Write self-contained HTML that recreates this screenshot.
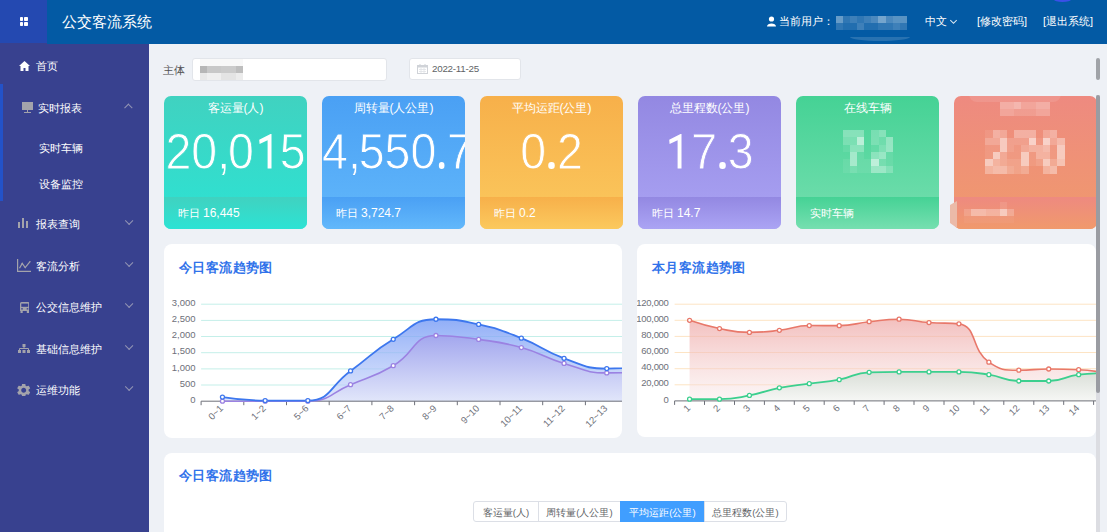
<!DOCTYPE html>
<html><head><meta charset="utf-8">
<style>
*{box-sizing:border-box;margin:0;padding:0}
html,body{width:1107px;height:532px;overflow:hidden;background:#eef1f6;font-family:"Liberation Sans", sans-serif;}
.abs{position:absolute}
#hdr{position:absolute;left:0;top:0;width:1107px;height:44px;background:#035aa4;color:#fff}
#logo{position:absolute;left:0;top:0;width:47.4px;height:43.2px;background:#2449b1}
#logo i{position:absolute;width:3.8px;height:3.8px;background:#fff;border-radius:0.8px}
#title{position:absolute;left:62px;top:12px;font-size:15px;line-height:20px;color:#fff;letter-spacing:0px}
.hr{position:absolute;top:14px;font-size:11px;line-height:15px;color:#fff}
#side{position:absolute;left:0;top:44px;width:149px;height:488px;background:#38418f}
.si{position:absolute;left:0;width:148px;color:#fff;font-size:11px;line-height:14px}
.si .tx{position:absolute;left:35.5px;top:0}
.si.sub .tx{left:39px}
.chev{position:absolute;left:126px;top:0.5px;width:5.5px;height:5.5px;border-left:1px solid #9294b4;border-bottom:1px solid #9294b4;transform:rotate(-45deg)}
.chev.up{transform:rotate(135deg);top:3.5px}
.card{position:absolute;top:96px;width:143px;height:133px;border-radius:7px;overflow:hidden;color:#fff}
.band{position:absolute;left:0;top:101px;width:143px;height:32px}
.ct{position:absolute;left:0;top:4px;width:143px;text-align:center;font-size:12px;line-height:16px}
.cn{position:absolute;left:-30px;top:28px;width:203px;text-align:center;font-size:50px;line-height:56px;letter-spacing:0px;white-space:nowrap;transform:scaleX(0.93)}.cn u{text-decoration:none;color:transparent;-webkit-text-stroke-color:transparent}.cn i{font-style:normal;letter-spacing:-2.3px}.cn i.d{display:inline-block;width:6.6px;height:6.6px;border-radius:50%;background:#fff;margin:0 2.5px 0 2.5px;letter-spacing:0}
.cf{position:absolute;left:14px;top:110px;font-size:10.8px;line-height:15px}.cf b{font-weight:normal;font-size:12px}
.panel{position:absolute;background:#fff;border-radius:8px;overflow:hidden}
.ptitle{position:absolute;left:15px;top:15px;font-size:13px;letter-spacing:0.4px;line-height:18px;font-weight:bold;color:#3072ea}
.inp{position:absolute;top:58px;height:23px;background:#fff;border:1px solid #e2e5ea;border-radius:3px}
.btns{position:absolute;left:473px;top:501px;height:21px;display:flex;font-size:9.5px;color:#606266}
.btns div{height:21px;line-height:18px;padding-top:2px;border:1px solid #dcdfe6;background:#fff;text-align:center;margin-left:-1px}.btns div:first-child{border-radius:3px 0 0 3px;margin-left:0}.btns div:last-child{border-radius:0 3px 3px 0}
.btns div.on{background:#409eff;border-color:#409eff;color:#fff}
</style></head><body>
<div id="hdr">
  <div id="logo"><i style="left:19.6px;top:17.4px"></i><i style="left:24.4px;top:17.4px"></i><i style="left:19.6px;top:22px"></i><i style="left:24.4px;top:22px"></i></div>
  <div id="title">公交客流系统</div>
  <svg class="abs" style="left:767px;top:16px" width="9" height="11" viewBox="0 0 9 11"><circle cx="4.5" cy="3" r="2.6" fill="#fff"/><path d="M0 10.5 C0 6.5 9 6.5 9 10.5 Z" fill="#fff"/></svg>
  <div class="hr" style="left:779px">当前用户：</div>
  <div class="abs" style="left:836px;top:16px;width:7px;height:7px;background:rgba(255,255,255,0.400)"></div><div class="abs" style="left:843px;top:16px;width:7px;height:7px;background:rgba(255,255,255,0.180)"></div><div class="abs" style="left:850px;top:16px;width:7px;height:7px;background:rgba(255,255,255,0.235)"></div><div class="abs" style="left:857px;top:16px;width:7px;height:7px;background:rgba(255,255,255,0.180)"></div><div class="abs" style="left:864px;top:16px;width:7px;height:7px;background:rgba(255,255,255,0.235)"></div><div class="abs" style="left:871px;top:16px;width:7px;height:7px;background:rgba(255,255,255,0.290)"></div><div class="abs" style="left:878px;top:16px;width:8px;height:7px;background:rgba(255,255,255,0.455)"></div><div class="abs" style="left:886px;top:16px;width:7px;height:7px;background:rgba(255,255,255,0.290)"></div><div class="abs" style="left:893px;top:16px;width:7px;height:7px;background:rgba(255,255,255,0.345)"></div><div class="abs" style="left:900px;top:16px;width:7px;height:7px;background:rgba(255,255,255,0.345)"></div><div class="abs" style="left:836px;top:23px;width:7px;height:7px;background:rgba(255,255,255,0.180)"></div><div class="abs" style="left:843px;top:23px;width:7px;height:7px;background:rgba(255,255,255,0.125)"></div><div class="abs" style="left:850px;top:23px;width:7px;height:7px;background:rgba(255,255,255,0.125)"></div><div class="abs" style="left:857px;top:23px;width:7px;height:7px;background:rgba(255,255,255,0.235)"></div><div class="abs" style="left:864px;top:23px;width:7px;height:7px;background:rgba(255,255,255,0.125)"></div><div class="abs" style="left:871px;top:23px;width:7px;height:7px;background:rgba(255,255,255,0.125)"></div><div class="abs" style="left:878px;top:23px;width:8px;height:7px;background:rgba(255,255,255,0.180)"></div><div class="abs" style="left:886px;top:23px;width:7px;height:7px;background:rgba(255,255,255,0.180)"></div><div class="abs" style="left:893px;top:23px;width:7px;height:7px;background:rgba(255,255,255,0.235)"></div><div class="abs" style="left:900px;top:23px;width:7px;height:7px;background:rgba(255,255,255,0.180)"></div><div class="abs" style="left:1054px;top:-3px;width:17px;height:5px;border-radius:50%;background:#3a50e8"></div><div class="abs" style="left:850px;top:37px;width:60px;height:4px;border-radius:0 0 30px 30px/0 0 4px 4px;background:rgba(255,255,255,0.15)"></div>
  <div class="hr" style="left:925px">中文</div>
  <div class="abs" style="left:951px;top:17.5px;width:5px;height:5px;border-right:1px solid rgba(255,255,255,0.85);border-bottom:1px solid rgba(255,255,255,0.85);transform:rotate(45deg)"></div>
  <div class="hr" style="left:977px">[修改密码]</div>
  <div class="hr" style="left:1043px">[退出系统]</div>
</div>
<div class="abs" style="left:0;top:43.2px;width:47.4px;height:1px;background:#38418f;z-index:2"></div>
<div id="side">
  <div class="abs" style="left:0;top:40px;width:3px;height:117px;background:#2352c8"></div>
  <div class="si" style="top:15px"><svg class="abs" style="left:18.5px;top:1.5px" width="11" height="10" viewBox="0 0 11 10"><path d="M5.5 0 L11 5 L9.5 5 L9.5 10 L6.5 10 L6.5 7 L4.5 7 L4.5 10 L1.5 10 L1.5 5 L0 5 Z" fill="#fff"/></svg><span class="tx" style="left:36px">首页</span></div>
  <div class="si" style="top:57px"><svg class="abs" style="left:22px;top:1px" width="11" height="11" viewBox="0 0 11 11"><rect x="0" y="0" width="11" height="8" fill="#a3a3ab"/><rect x="5" y="8" width="1" height="2" fill="#a3a3ab"/><rect x="2" y="10" width="7" height="1" fill="#a3a3ab"/></svg><span class="tx" style="left:38px">实时报表</span><div class="chev up"></div></div>
  <div class="si sub" style="top:97px"><span class="tx">实时车辆</span></div>
  <div class="si sub" style="top:133px"><span class="tx">设备监控</span></div>
  <div class="si" style="top:173px"><svg class="abs" style="left:18px;top:1px" width="10" height="10" viewBox="0 0 10 10"><rect x="0" y="4" width="2" height="6" fill="#a3a3ab"/><rect x="4" y="0" width="2" height="10" fill="#a3a3ab"/><rect x="8" y="3" width="2" height="7" fill="#a3a3ab"/></svg><span class="tx">报表查询</span><div class="chev"></div></div>
  <div class="si" style="top:215px"><svg class="abs" style="left:17px;top:0px" width="14" height="13" viewBox="0 0 14 13"><path d="M0.6 0 V12.4 H14" fill="none" stroke="#a3a3ab" stroke-width="1.2"/><path d="M2.5 9.2 L5.2 4.4 L8.2 8.6 L13 2.6" fill="none" stroke="#a3a3ab" stroke-width="1.2"/><circle cx="5.2" cy="4.4" r="0.7" fill="#a3a3ab"/><circle cx="8.2" cy="8.6" r="0.7" fill="#a3a3ab"/><circle cx="13" cy="2.6" r="0.7" fill="#a3a3ab"/></svg><span class="tx">客流分析</span><div class="chev"></div></div>
  <div class="si" style="top:256px"><svg class="abs" style="left:19.5px;top:1.5px" width="9.5" height="11" viewBox="0 0 9.5 11"><path d="M1.5 0 H8 Q9.5 0 9.5 1.5 V9 H0 V1.5 Q0 0 1.5 0 Z" fill="#a3a3ab"/><rect x="1.3" y="1.6" width="6.9" height="3.2" fill="#38418f"/><rect x="1.2" y="6.2" width="1.6" height="1.3" fill="#38418f"/><rect x="6.7" y="6.2" width="1.6" height="1.3" fill="#38418f"/><rect x="0.5" y="9" width="2.2" height="2" fill="#a3a3ab"/><rect x="6.8" y="9" width="2.2" height="2" fill="#a3a3ab"/></svg><span class="tx">公交信息维护</span><div class="chev"></div></div>
  <div class="si" style="top:298px"><svg class="abs" style="left:18.3px;top:1.5px" width="12" height="9" viewBox="0 0 12 9"><rect x="4.5" y="0" width="3" height="3" fill="#a3a3ab"/><rect x="5.5" y="3" width="1" height="1.8" fill="#a3a3ab"/><path d="M1.5 6.5 V4.5 H10.5 V6.5" fill="none" stroke="#a3a3ab" stroke-width="1"/><rect x="0" y="6" width="3" height="3" fill="#a3a3ab"/><rect x="4.5" y="6" width="3" height="3" fill="#a3a3ab"/><rect x="9" y="6" width="3" height="3" fill="#a3a3ab"/></svg><span class="tx">基础信息维护</span><div class="chev"></div></div>
  <div class="si" style="top:339px"><svg class="abs" style="left:17.3px;top:0.5px" width="13.4" height="12.5" viewBox="2.6 2.9 18.8 18.2"><path fill="#a3a3ab" d="M19.14 12.94c.04-.3.06-.61.06-.94 0-.32-.02-.64-.07-.94l2.03-1.58a.49.49 0 0 0 .12-.61l-1.92-3.32a.488.488 0 0 0-.59-.22l-2.39.96c-.5-.38-1.03-.7-1.62-.94l-.36-2.54a.484.484 0 0 0-.48-.41h-3.84c-.24 0-.43.17-.47.41l-.36 2.54c-.59.24-1.13.57-1.62.94l-2.39-.96c-.22-.08-.47 0-.59.22L2.74 8.87c-.12.21-.08.47.12.61l2.03 1.58c-.05.3-.09.63-.09.94s.02.64.07.94l-2.03 1.58a.49.49 0 0 0-.12.61l1.92 3.32c.12.22.37.29.59.22l2.39-.96c.5.38 1.03.7 1.62.94l.36 2.54c.05.24.24.41.48.41h3.84c.24 0 .44-.17.47-.41l.36-2.54c.59-.24 1.13-.56 1.62-.94l2.39.96c.22.08.47 0 .59-.22l1.92-3.32c.12-.22.07-.47-.12-.61l-2.01-1.58zM12 15.6c-1.98 0-3.6-1.62-3.6-3.6s1.62-3.6 3.6-3.6 3.6 1.62 3.6 3.6-1.62 3.6-3.6 3.6z"/></svg><span class="tx">运维功能</span><div class="chev"></div></div>
</div>
<div class="abs" style="left:163px;top:63px;font-size:11.2px;line-height:14px;color:#505050">主体</div>
<div class="inp" style="left:192px;width:195px"></div><div class="abs" style="left:200px;top:59px;width:7px;height:7px;background:#f8f8f8"></div><div class="abs" style="left:207px;top:59px;width:7px;height:7px;background:#f8f8f8"></div><div class="abs" style="left:214px;top:59px;width:7px;height:7px;background:#f8f8f8"></div><div class="abs" style="left:221px;top:59px;width:7px;height:7px;background:#f8f8f8"></div><div class="abs" style="left:228px;top:59px;width:8px;height:7px;background:#f8f8f8"></div><div class="abs" style="left:236px;top:59px;width:7px;height:7px;background:#f8f8f8"></div><div class="abs" style="left:200px;top:66px;width:7px;height:7px;background:#b6b6b6"></div><div class="abs" style="left:207px;top:66px;width:7px;height:7px;background:#c8c8c8"></div><div class="abs" style="left:214px;top:66px;width:7px;height:7px;background:#c8c8c8"></div><div class="abs" style="left:221px;top:66px;width:7px;height:7px;background:#cbcbcb"></div><div class="abs" style="left:228px;top:66px;width:8px;height:7px;background:#cbcbcb"></div><div class="abs" style="left:236px;top:66px;width:7px;height:7px;background:#bebebe"></div><div class="abs" style="left:200px;top:73px;width:7px;height:7px;background:#e8e8e8"></div><div class="abs" style="left:207px;top:73px;width:7px;height:7px;background:#efefef"></div><div class="abs" style="left:214px;top:73px;width:7px;height:7px;background:#efefef"></div><div class="abs" style="left:221px;top:73px;width:7px;height:7px;background:#e4e4e4"></div><div class="abs" style="left:228px;top:73px;width:8px;height:7px;background:#e4e4e4"></div><div class="abs" style="left:236px;top:73px;width:7px;height:7px;background:#ececec"></div>
<div class="inp" style="left:409px;width:112px;top:58px;height:22px">
 <svg class="abs" style="left:7px;top:5px" width="11" height="10" viewBox="0 0 11 10"><rect x="0.5" y="1.5" width="10" height="8" fill="none" stroke="#d0d3d8"/><rect x="0.5" y="1.5" width="10" height="2" fill="#d0d3d8"/><rect x="2.5" y="0" width="1" height="2" fill="#d0d3d8"/><rect x="7.5" y="0" width="1" height="2" fill="#d0d3d8"/><path d="M2 5.5h7M2 7.5h7M4 4v5M7 4v5" stroke="#e0e2e6" stroke-width="0.8"/></svg>
 <div class="abs" style="left:22px;top:2.5px;font-size:9.8px;letter-spacing:-0.25px;line-height:13px;color:#606266">2022-11-25</div>
</div>
<div class="card" style="left:164px;background:linear-gradient(180deg,#40d2c0 0%,#2ce3d4 100%)"><div class="band" style="background:linear-gradient(180deg,#40d2c0 0%,#2ce3d4 100%)"></div><div class="ct">客运量(人)</div><div class="cn" style="-webkit-text-stroke:0.8px #38d9c8;margin-left:0px">20<i>,</i>0<u>1</u>5</div><div class="cf">昨日 <b>16,445</b></div></div><div class="card" style="left:322px;background:linear-gradient(180deg,#4aa0f4 0%,#62b8fb 100%)"><div class="band" style="background:linear-gradient(180deg,#4aa0f4 0%,#62b8fb 100%)"></div><div class="ct">周转量(人公里)</div><div class="cn" style="-webkit-text-stroke:0.8px #54aaf7;margin-left:4px">4<i>,</i>550<i class='d'></i>7</div><div class="cf">昨日 <b>3,724.7</b></div></div><div class="card" style="left:480px;background:linear-gradient(180deg,#f7b04a 0%,#fbc95e 100%)"><div class="band" style="background:linear-gradient(180deg,#f7b04a 0%,#fbc95e 100%)"></div><div class="ct">平均运距(公里)</div><div class="cn" style="-webkit-text-stroke:0.8px #f9ba52;margin-left:0px">0<i class='d'></i>2</div><div class="cf">昨日 <b>0.2</b></div></div><div class="card" style="left:638px;background:linear-gradient(180deg,#9388e2 0%,#aba4f4 100%)"><div class="band" style="background:linear-gradient(180deg,#9388e2 0%,#aba4f4 100%)"></div><div class="ct">总里程数(公里)</div><div class="cn" style="-webkit-text-stroke:0.8px #9d94ea;margin-left:0px"><u>1</u>7<i class='d'></i>3</div><div class="cf">昨日 <b>14.7</b></div></div><div class="card" style="left:796px;background:linear-gradient(180deg,#45d295 0%,#76dfb0 100%)"><div class="band" style="background:linear-gradient(180deg,#45d295 0%,#76dfb0 100%)"></div><div class="ct">在线车辆</div><div class="cf">实时车辆</div></div><div class="card" style="left:954px;background:linear-gradient(180deg,#ee8a80 0%,#f09a6c 100%)"><div class="band" style="background:linear-gradient(180deg,#ee8a80 0%,#f09a6c 100%)"></div></div><div class="abs" style="left:843px;top:130px;width:7px;height:7px;background:rgba(255,255,255,0.300)"></div><div class="abs" style="left:850px;top:130px;width:7px;height:7px;background:rgba(255,255,255,0.300)"></div><div class="abs" style="left:857px;top:130px;width:7px;height:7px;background:rgba(255,255,255,0.300)"></div><div class="abs" style="left:871px;top:130px;width:8px;height:7px;background:rgba(255,255,255,0.225)"></div><div class="abs" style="left:879px;top:130px;width:7px;height:7px;background:rgba(255,255,255,0.300)"></div><div class="abs" style="left:843px;top:137px;width:7px;height:8px;background:rgba(255,255,255,0.225)"></div><div class="abs" style="left:850px;top:137px;width:7px;height:8px;background:rgba(255,255,255,0.225)"></div><div class="abs" style="left:857px;top:137px;width:7px;height:8px;background:rgba(255,255,255,0.600)"></div><div class="abs" style="left:871px;top:137px;width:8px;height:8px;background:rgba(255,255,255,0.225)"></div><div class="abs" style="left:879px;top:137px;width:7px;height:8px;background:rgba(255,255,255,0.150)"></div><div class="abs" style="left:886px;top:137px;width:7px;height:8px;background:rgba(255,255,255,0.375)"></div><div class="abs" style="left:843px;top:145px;width:7px;height:7px;background:rgba(255,255,255,0.075)"></div><div class="abs" style="left:850px;top:145px;width:7px;height:7px;background:rgba(255,255,255,0.300)"></div><div class="abs" style="left:857px;top:145px;width:7px;height:7px;background:rgba(255,255,255,0.300)"></div><div class="abs" style="left:871px;top:145px;width:8px;height:7px;background:rgba(255,255,255,0.075)"></div><div class="abs" style="left:879px;top:145px;width:7px;height:7px;background:rgba(255,255,255,0.225)"></div><div class="abs" style="left:886px;top:145px;width:7px;height:7px;background:rgba(255,255,255,0.375)"></div><div class="abs" style="left:850px;top:152px;width:7px;height:7px;background:rgba(255,255,255,0.450)"></div><div class="abs" style="left:857px;top:152px;width:7px;height:7px;background:rgba(255,255,255,0.075)"></div><div class="abs" style="left:871px;top:152px;width:8px;height:7px;background:rgba(255,255,255,0.300)"></div><div class="abs" style="left:879px;top:152px;width:7px;height:7px;background:rgba(255,255,255,0.375)"></div><div class="abs" style="left:886px;top:152px;width:7px;height:7px;background:rgba(255,255,255,0.075)"></div><div class="abs" style="left:843px;top:159px;width:7px;height:7px;background:rgba(255,255,255,0.075)"></div><div class="abs" style="left:850px;top:159px;width:7px;height:7px;background:rgba(255,255,255,0.450)"></div><div class="abs" style="left:857px;top:159px;width:7px;height:7px;background:rgba(255,255,255,0.075)"></div><div class="abs" style="left:864px;top:159px;width:7px;height:7px;background:rgba(255,255,255,0.075)"></div><div class="abs" style="left:871px;top:159px;width:8px;height:7px;background:rgba(255,255,255,0.600)"></div><div class="abs" style="left:879px;top:159px;width:7px;height:7px;background:rgba(255,255,255,0.150)"></div><div class="abs" style="left:886px;top:159px;width:7px;height:7px;background:rgba(255,255,255,0.075)"></div><div class="abs" style="left:843px;top:166px;width:7px;height:7px;background:rgba(255,255,255,0.075)"></div><div class="abs" style="left:850px;top:166px;width:7px;height:7px;background:rgba(255,255,255,0.150)"></div><div class="abs" style="left:857px;top:166px;width:7px;height:7px;background:rgba(255,255,255,0.075)"></div><div class="abs" style="left:864px;top:166px;width:7px;height:7px;background:rgba(255,255,255,0.075)"></div><div class="abs" style="left:871px;top:166px;width:8px;height:7px;background:rgba(255,255,255,0.375)"></div><div class="abs" style="left:879px;top:166px;width:7px;height:7px;background:rgba(255,255,255,0.375)"></div><div class="abs" style="left:886px;top:166px;width:7px;height:7px;background:rgba(255,255,255,0.225)"></div><div class="abs" style="left:969px;top:94px;width:92px;height:8px;border-radius:0 0 10px 10px;background:rgba(255,255,255,0.10)"></div><div class="abs" style="left:950px;top:201px;width:7px;height:27px;background:#ebbaa8;clip-path:polygon(0 4px,7px 0,7px 27px,0 22px)"></div><div class="abs" style="left:985px;top:130px;width:8px;height:8px;background:rgba(255,255,255,0.075)"></div><div class="abs" style="left:993px;top:130px;width:7px;height:8px;background:rgba(255,255,255,0.300)"></div><div class="abs" style="left:1000px;top:130px;width:7px;height:8px;background:rgba(255,255,255,0.225)"></div><div class="abs" style="left:1014px;top:130px;width:7px;height:8px;background:rgba(255,255,255,0.300)"></div><div class="abs" style="left:1021px;top:130px;width:8px;height:8px;background:rgba(255,255,255,0.300)"></div><div class="abs" style="left:1029px;top:130px;width:7px;height:8px;background:rgba(255,255,255,0.300)"></div><div class="abs" style="left:1043px;top:130px;width:7px;height:8px;background:rgba(255,255,255,0.225)"></div><div class="abs" style="left:1050px;top:130px;width:7px;height:8px;background:rgba(255,255,255,0.300)"></div><div class="abs" style="left:985px;top:138px;width:8px;height:7px;background:rgba(255,255,255,0.225)"></div><div class="abs" style="left:993px;top:138px;width:7px;height:7px;background:rgba(255,255,255,0.225)"></div><div class="abs" style="left:1000px;top:138px;width:7px;height:7px;background:rgba(255,255,255,0.525)"></div><div class="abs" style="left:1007px;top:138px;width:7px;height:7px;background:rgba(255,255,255,0.150)"></div><div class="abs" style="left:1014px;top:138px;width:7px;height:7px;background:rgba(255,255,255,0.150)"></div><div class="abs" style="left:1021px;top:138px;width:8px;height:7px;background:rgba(255,255,255,0.150)"></div><div class="abs" style="left:1029px;top:138px;width:7px;height:7px;background:rgba(255,255,255,0.600)"></div><div class="abs" style="left:1036px;top:138px;width:7px;height:7px;background:rgba(255,255,255,0.075)"></div><div class="abs" style="left:1043px;top:138px;width:7px;height:7px;background:rgba(255,255,255,0.600)"></div><div class="abs" style="left:1050px;top:138px;width:7px;height:7px;background:rgba(255,255,255,0.225)"></div><div class="abs" style="left:1057px;top:138px;width:8px;height:7px;background:rgba(255,255,255,0.375)"></div><div class="abs" style="left:985px;top:145px;width:8px;height:7px;background:rgba(255,255,255,0.075)"></div><div class="abs" style="left:993px;top:145px;width:7px;height:7px;background:rgba(255,255,255,0.075)"></div><div class="abs" style="left:1000px;top:145px;width:7px;height:7px;background:rgba(255,255,255,0.525)"></div><div class="abs" style="left:1007px;top:145px;width:7px;height:7px;background:rgba(255,255,255,0.150)"></div><div class="abs" style="left:1014px;top:145px;width:7px;height:7px;background:rgba(255,255,255,0.075)"></div><div class="abs" style="left:1021px;top:145px;width:8px;height:7px;background:rgba(255,255,255,0.225)"></div><div class="abs" style="left:1029px;top:145px;width:7px;height:7px;background:rgba(255,255,255,0.300)"></div><div class="abs" style="left:1036px;top:145px;width:7px;height:7px;background:rgba(255,255,255,0.300)"></div><div class="abs" style="left:1043px;top:145px;width:7px;height:7px;background:rgba(255,255,255,0.375)"></div><div class="abs" style="left:1050px;top:145px;width:7px;height:7px;background:rgba(255,255,255,0.075)"></div><div class="abs" style="left:1057px;top:145px;width:8px;height:7px;background:rgba(255,255,255,0.525)"></div><div class="abs" style="left:985px;top:152px;width:8px;height:7px;background:rgba(255,255,255,0.075)"></div><div class="abs" style="left:993px;top:152px;width:7px;height:7px;background:rgba(255,255,255,0.525)"></div><div class="abs" style="left:1000px;top:152px;width:7px;height:7px;background:rgba(255,255,255,0.225)"></div><div class="abs" style="left:1007px;top:152px;width:7px;height:7px;background:rgba(255,255,255,0.075)"></div><div class="abs" style="left:1014px;top:152px;width:7px;height:7px;background:rgba(255,255,255,0.075)"></div><div class="abs" style="left:1021px;top:152px;width:8px;height:7px;background:rgba(255,255,255,0.525)"></div><div class="abs" style="left:1029px;top:152px;width:7px;height:7px;background:rgba(255,255,255,0.075)"></div><div class="abs" style="left:1036px;top:152px;width:7px;height:7px;background:rgba(255,255,255,0.300)"></div><div class="abs" style="left:1043px;top:152px;width:7px;height:7px;background:rgba(255,255,255,0.300)"></div><div class="abs" style="left:1050px;top:152px;width:7px;height:7px;background:rgba(255,255,255,0.075)"></div><div class="abs" style="left:1057px;top:152px;width:8px;height:7px;background:rgba(255,255,255,0.525)"></div><div class="abs" style="left:985px;top:159px;width:8px;height:7px;background:rgba(255,255,255,0.525)"></div><div class="abs" style="left:993px;top:159px;width:7px;height:7px;background:rgba(255,255,255,0.300)"></div><div class="abs" style="left:1000px;top:159px;width:7px;height:7px;background:rgba(255,255,255,0.225)"></div><div class="abs" style="left:1007px;top:159px;width:7px;height:7px;background:rgba(255,255,255,0.150)"></div><div class="abs" style="left:1014px;top:159px;width:7px;height:7px;background:rgba(255,255,255,0.150)"></div><div class="abs" style="left:1021px;top:159px;width:8px;height:7px;background:rgba(255,255,255,0.525)"></div><div class="abs" style="left:1029px;top:159px;width:7px;height:7px;background:rgba(255,255,255,0.075)"></div><div class="abs" style="left:1036px;top:159px;width:7px;height:7px;background:rgba(255,255,255,0.150)"></div><div class="abs" style="left:1043px;top:159px;width:7px;height:7px;background:rgba(255,255,255,0.525)"></div><div class="abs" style="left:1050px;top:159px;width:7px;height:7px;background:rgba(255,255,255,0.225)"></div><div class="abs" style="left:1057px;top:159px;width:8px;height:7px;background:rgba(255,255,255,0.450)"></div><div class="abs" style="left:985px;top:166px;width:8px;height:8px;background:rgba(255,255,255,0.300)"></div><div class="abs" style="left:993px;top:166px;width:7px;height:8px;background:rgba(255,255,255,0.375)"></div><div class="abs" style="left:1000px;top:166px;width:7px;height:8px;background:rgba(255,255,255,0.375)"></div><div class="abs" style="left:1007px;top:166px;width:7px;height:8px;background:rgba(255,255,255,0.225)"></div><div class="abs" style="left:1014px;top:166px;width:7px;height:8px;background:rgba(255,255,255,0.150)"></div><div class="abs" style="left:1021px;top:166px;width:8px;height:8px;background:rgba(255,255,255,0.225)"></div><div class="abs" style="left:1043px;top:166px;width:7px;height:8px;background:rgba(255,255,255,0.300)"></div><div class="abs" style="left:1050px;top:166px;width:7px;height:8px;background:rgba(255,255,255,0.375)"></div><div class="abs" style="left:1000px;top:102px;width:7px;height:7px;background:rgba(255,255,255,0.300)"></div><div class="abs" style="left:1007px;top:102px;width:7px;height:7px;background:rgba(255,255,255,0.300)"></div><div class="abs" style="left:1014px;top:102px;width:7px;height:7px;background:rgba(255,255,255,0.375)"></div><div class="abs" style="left:1021px;top:102px;width:8px;height:7px;background:rgba(255,255,255,0.225)"></div><div class="abs" style="left:1029px;top:102px;width:7px;height:7px;background:rgba(255,255,255,0.225)"></div><div class="abs" style="left:1036px;top:102px;width:7px;height:7px;background:rgba(255,255,255,0.300)"></div><div class="abs" style="left:1043px;top:102px;width:7px;height:7px;background:rgba(255,255,255,0.300)"></div><div class="abs" style="left:1000px;top:109px;width:7px;height:7px;background:rgba(255,255,255,0.225)"></div><div class="abs" style="left:1007px;top:109px;width:7px;height:7px;background:rgba(255,255,255,0.225)"></div><div class="abs" style="left:1014px;top:109px;width:7px;height:7px;background:rgba(255,255,255,0.150)"></div><div class="abs" style="left:1021px;top:109px;width:8px;height:7px;background:rgba(255,255,255,0.150)"></div><div class="abs" style="left:1029px;top:109px;width:7px;height:7px;background:rgba(255,255,255,0.150)"></div><div class="abs" style="left:1036px;top:109px;width:7px;height:7px;background:rgba(255,255,255,0.225)"></div><div class="abs" style="left:1043px;top:109px;width:7px;height:7px;background:rgba(255,255,255,0.225)"></div><div class="abs" style="left:1000px;top:202px;width:7px;height:7px;background:rgba(255,255,255,0.090)"></div><div class="abs" style="left:964px;top:209px;width:7px;height:7px;background:rgba(255,255,255,0.150)"></div><div class="abs" style="left:971px;top:209px;width:7px;height:7px;background:rgba(255,255,255,0.375)"></div><div class="abs" style="left:978px;top:209px;width:8px;height:7px;background:rgba(255,255,255,0.375)"></div><div class="abs" style="left:986px;top:209px;width:7px;height:7px;background:rgba(255,255,255,0.300)"></div><div class="abs" style="left:993px;top:209px;width:7px;height:7px;background:rgba(255,255,255,0.300)"></div><div class="abs" style="left:1000px;top:209px;width:7px;height:7px;background:rgba(255,255,255,0.525)"></div><div class="abs" style="left:1007px;top:209px;width:7px;height:7px;background:rgba(255,255,255,0.225)"></div><div class="abs" style="left:964px;top:216px;width:7px;height:7px;background:rgba(255,255,255,0.045)"></div><div class="abs" style="left:971px;top:216px;width:7px;height:7px;background:rgba(255,255,255,0.045)"></div><div class="abs" style="left:978px;top:216px;width:8px;height:7px;background:rgba(255,255,255,0.045)"></div><div class="abs" style="left:986px;top:216px;width:7px;height:7px;background:rgba(255,255,255,0.045)"></div><div class="abs" style="left:993px;top:216px;width:7px;height:7px;background:rgba(255,255,255,0.045)"></div><div class="abs" style="left:1000px;top:216px;width:7px;height:7px;background:rgba(255,255,255,0.045)"></div><div class="abs" style="left:1007px;top:216px;width:7px;height:7px;background:rgba(255,255,255,0.045)"></div><svg class="abs" style="left:258.5px;top:134.3px" width="13" height="35" viewBox="0 0 13 35"><path d="M11.5 0 H12.5 V34.4 H8.6 V6.2 L0.6 9.9 L0.2 5.8 Z" fill="#fff"/></svg><svg class="abs" style="left:668.5px;top:134.3px" width="13" height="35" viewBox="0 0 13 35"><path d="M11.5 0 H12.5 V34.4 H8.6 V6.2 L0.6 9.9 L0.2 5.8 Z" fill="#fff"/></svg>
<div class="panel" style="left:164px;top:244px;width:458px;height:194px">
<svg width="458" height="194" viewBox="164 244 458 194" style="position:absolute;left:0;top:0">
<defs><linearGradient id="gb" x1="0" y1="0" x2="0" y2="1"><stop offset="0" stop-color="#759af5" stop-opacity="0.8"/><stop offset="1" stop-color="#c9d6fb" stop-opacity="0.6"/></linearGradient><linearGradient id="gp" x1="0" y1="0" x2="0" y2="1"><stop offset="0" stop-color="#a3a7ee"/><stop offset="1" stop-color="#e1e6fa"/></linearGradient></defs>
<text x="195.6" y="402.8" text-anchor="end" font-size="9.5" fill="#6e7079" font-family="'Liberation Sans', sans-serif">0</text>
<line x1="201.1" y1="385.0" x2="630" y2="385.0" stroke="#c4efe9" stroke-width="1"/>
<text x="195.6" y="386.6" text-anchor="end" font-size="9.5" fill="#6e7079" font-family="'Liberation Sans', sans-serif">500</text>
<line x1="201.1" y1="368.9" x2="630" y2="368.9" stroke="#c4efe9" stroke-width="1"/>
<text x="195.6" y="370.5" text-anchor="end" font-size="9.5" fill="#6e7079" font-family="'Liberation Sans', sans-serif">1,000</text>
<line x1="201.1" y1="352.7" x2="630" y2="352.7" stroke="#c4efe9" stroke-width="1"/>
<text x="195.6" y="354.3" text-anchor="end" font-size="9.5" fill="#6e7079" font-family="'Liberation Sans', sans-serif">1,500</text>
<line x1="201.1" y1="336.5" x2="630" y2="336.5" stroke="#c4efe9" stroke-width="1"/>
<text x="195.6" y="338.1" text-anchor="end" font-size="9.5" fill="#6e7079" font-family="'Liberation Sans', sans-serif">2,000</text>
<line x1="201.1" y1="320.4" x2="630" y2="320.4" stroke="#c4efe9" stroke-width="1"/>
<text x="195.6" y="322.0" text-anchor="end" font-size="9.5" fill="#6e7079" font-family="'Liberation Sans', sans-serif">2,500</text>
<line x1="201.1" y1="304.2" x2="630" y2="304.2" stroke="#c4efe9" stroke-width="1"/>
<text x="195.6" y="305.8" text-anchor="end" font-size="9.5" fill="#6e7079" font-family="'Liberation Sans', sans-serif">3,000</text>
<path d="M222.45 397.09 C222.45 397.09 243.77 400.55 265.15 400.55 C286.47 400.55 288.59 400.55 307.85 400.55 C331.29 400.55 329.45 386.11 350.55 370.97 C372.15 355.47 370.62 352.99 393.25 339.28 C413.32 327.12 413.62 319.24 435.95 319.24 C456.32 319.24 457.75 319.78 478.65 324.41 C500.45 329.24 500.55 329.90 521.35 338.15 C543.25 346.84 541.93 350.40 564.05 358.29 C584.63 365.63 585.13 368.61 606.75 368.61 C627.83 368.61 649.45 365.31 649.45 365.31 L649.45 401.20 L222.45 401.20 Z" fill="url(#gb)"/>
<path d="M222.45 401.20 C222.45 401.20 243.80 401.20 265.15 401.20 C286.50 401.20 287.24 401.20 307.85 401.20 C329.94 401.20 329.42 393.49 350.55 384.71 C372.12 375.74 373.10 377.31 393.25 365.70 C415.80 352.70 412.49 335.50 435.95 335.50 C455.19 335.50 457.45 336.41 478.65 339.41 C500.15 342.46 500.49 341.73 521.35 347.59 C543.19 353.73 542.27 356.95 564.05 363.40 C584.97 369.60 585.15 372.91 606.75 372.91 C627.85 372.91 649.45 371.78 649.45 371.78 L649.45 401.20 L222.45 401.20 Z" fill="url(#gp)"/>
<line x1="201.1" y1="401.2" x2="630" y2="401.2" stroke="#6e7079" stroke-width="1"/>
<line x1="201.1" y1="401.2" x2="201.1" y2="405.2" stroke="#6e7079" stroke-width="1"/>
<line x1="243.8" y1="401.2" x2="243.8" y2="405.2" stroke="#6e7079" stroke-width="1"/>
<line x1="286.5" y1="401.2" x2="286.5" y2="405.2" stroke="#6e7079" stroke-width="1"/>
<line x1="329.2" y1="401.2" x2="329.2" y2="405.2" stroke="#6e7079" stroke-width="1"/>
<line x1="371.9" y1="401.2" x2="371.9" y2="405.2" stroke="#6e7079" stroke-width="1"/>
<line x1="414.6" y1="401.2" x2="414.6" y2="405.2" stroke="#6e7079" stroke-width="1"/>
<line x1="457.3" y1="401.2" x2="457.3" y2="405.2" stroke="#6e7079" stroke-width="1"/>
<line x1="500.0" y1="401.2" x2="500.0" y2="405.2" stroke="#6e7079" stroke-width="1"/>
<line x1="542.7" y1="401.2" x2="542.7" y2="405.2" stroke="#6e7079" stroke-width="1"/>
<line x1="585.4" y1="401.2" x2="585.4" y2="405.2" stroke="#6e7079" stroke-width="1"/>
<line x1="628.1" y1="401.2" x2="628.1" y2="405.2" stroke="#6e7079" stroke-width="1"/>
<line x1="670.8" y1="401.2" x2="670.8" y2="405.2" stroke="#6e7079" stroke-width="1"/>
<path d="M222.45 401.20 C222.45 401.20 243.80 401.20 265.15 401.20 C286.50 401.20 287.24 401.20 307.85 401.20 C329.94 401.20 329.42 393.49 350.55 384.71 C372.12 375.74 373.10 377.31 393.25 365.70 C415.80 352.70 412.49 335.50 435.95 335.50 C455.19 335.50 457.45 336.41 478.65 339.41 C500.15 342.46 500.49 341.73 521.35 347.59 C543.19 353.73 542.27 356.95 564.05 363.40 C584.97 369.60 585.15 372.91 606.75 372.91 C627.85 372.91 649.45 371.78 649.45 371.78" fill="none" stroke="#9b82e2" stroke-width="1.6"/>
<path d="M222.45 397.09 C222.45 397.09 243.77 400.55 265.15 400.55 C286.47 400.55 288.59 400.55 307.85 400.55 C331.29 400.55 329.45 386.11 350.55 370.97 C372.15 355.47 370.62 352.99 393.25 339.28 C413.32 327.12 413.62 319.24 435.95 319.24 C456.32 319.24 457.75 319.78 478.65 324.41 C500.45 329.24 500.55 329.90 521.35 338.15 C543.25 346.84 541.93 350.40 564.05 358.29 C584.63 365.63 585.13 368.61 606.75 368.61 C627.83 368.61 649.45 365.31 649.45 365.31" fill="none" stroke="#3d77ee" stroke-width="1.8"/>
<circle cx="222.45" cy="401.20" r="2" fill="#fff" stroke="#9b82e2" stroke-width="1.3"/>
<circle cx="265.15" cy="401.20" r="2" fill="#fff" stroke="#9b82e2" stroke-width="1.3"/>
<circle cx="307.85" cy="401.20" r="2" fill="#fff" stroke="#9b82e2" stroke-width="1.3"/>
<circle cx="350.55" cy="384.71" r="2" fill="#fff" stroke="#9b82e2" stroke-width="1.3"/>
<circle cx="393.25" cy="365.70" r="2" fill="#fff" stroke="#9b82e2" stroke-width="1.3"/>
<circle cx="435.95" cy="335.50" r="2" fill="#fff" stroke="#9b82e2" stroke-width="1.3"/>
<circle cx="478.65" cy="339.41" r="2" fill="#fff" stroke="#9b82e2" stroke-width="1.3"/>
<circle cx="521.35" cy="347.59" r="2" fill="#fff" stroke="#9b82e2" stroke-width="1.3"/>
<circle cx="564.05" cy="363.40" r="2" fill="#fff" stroke="#9b82e2" stroke-width="1.3"/>
<circle cx="606.75" cy="372.91" r="2" fill="#fff" stroke="#9b82e2" stroke-width="1.3"/>
<circle cx="649.45" cy="371.78" r="2" fill="#fff" stroke="#9b82e2" stroke-width="1.3"/>
<circle cx="222.45" cy="397.09" r="2" fill="#fff" stroke="#3d77ee" stroke-width="1.3"/>
<circle cx="265.15" cy="400.55" r="2" fill="#fff" stroke="#3d77ee" stroke-width="1.3"/>
<circle cx="307.85" cy="400.55" r="2" fill="#fff" stroke="#3d77ee" stroke-width="1.3"/>
<circle cx="350.55" cy="370.97" r="2" fill="#fff" stroke="#3d77ee" stroke-width="1.3"/>
<circle cx="393.25" cy="339.28" r="2" fill="#fff" stroke="#3d77ee" stroke-width="1.3"/>
<circle cx="435.95" cy="319.24" r="2" fill="#fff" stroke="#3d77ee" stroke-width="1.3"/>
<circle cx="478.65" cy="324.41" r="2" fill="#fff" stroke="#3d77ee" stroke-width="1.3"/>
<circle cx="521.35" cy="338.15" r="2" fill="#fff" stroke="#3d77ee" stroke-width="1.3"/>
<circle cx="564.05" cy="358.29" r="2" fill="#fff" stroke="#3d77ee" stroke-width="1.3"/>
<circle cx="606.75" cy="368.61" r="2" fill="#fff" stroke="#3d77ee" stroke-width="1.3"/>
<circle cx="649.45" cy="365.31" r="2" fill="#fff" stroke="#3d77ee" stroke-width="1.3"/>
<text x="220.9" y="410.2" text-anchor="end" font-size="9.5" fill="#6e7079" transform="rotate(-45 220.9 406.2)" font-family="'Liberation Sans', sans-serif">0~1</text>
<text x="263.6" y="410.2" text-anchor="end" font-size="9.5" fill="#6e7079" transform="rotate(-45 263.6 406.2)" font-family="'Liberation Sans', sans-serif">1~2</text>
<text x="306.4" y="410.2" text-anchor="end" font-size="9.5" fill="#6e7079" transform="rotate(-45 306.4 406.2)" font-family="'Liberation Sans', sans-serif">5~6</text>
<text x="349.1" y="410.2" text-anchor="end" font-size="9.5" fill="#6e7079" transform="rotate(-45 349.1 406.2)" font-family="'Liberation Sans', sans-serif">6~7</text>
<text x="391.8" y="410.2" text-anchor="end" font-size="9.5" fill="#6e7079" transform="rotate(-45 391.8 406.2)" font-family="'Liberation Sans', sans-serif">7~8</text>
<text x="434.5" y="410.2" text-anchor="end" font-size="9.5" fill="#6e7079" transform="rotate(-45 434.5 406.2)" font-family="'Liberation Sans', sans-serif">8~9</text>
<text x="477.1" y="410.2" text-anchor="end" font-size="9.5" fill="#6e7079" transform="rotate(-45 477.1 406.2)" font-family="'Liberation Sans', sans-serif">9~10</text>
<text x="519.9" y="410.2" text-anchor="end" font-size="9.5" fill="#6e7079" transform="rotate(-45 519.9 406.2)" font-family="'Liberation Sans', sans-serif">10~11</text>
<text x="562.6" y="410.2" text-anchor="end" font-size="9.5" fill="#6e7079" transform="rotate(-45 562.6 406.2)" font-family="'Liberation Sans', sans-serif">11~12</text>
<text x="605.2" y="410.2" text-anchor="end" font-size="9.5" fill="#6e7079" transform="rotate(-45 605.2 406.2)" font-family="'Liberation Sans', sans-serif">12~13</text>
<text x="648.0" y="410.2" text-anchor="end" font-size="9.5" fill="#6e7079" transform="rotate(-45 648.0 406.2)" font-family="'Liberation Sans', sans-serif">13~14</text>
</svg>
<div class="ptitle">今日客流趋势图</div>
</div>
<div class="panel" style="left:637px;top:244px;width:459px;height:193px">
<svg width="459" height="194" viewBox="637 244 459 194" style="position:absolute;left:0;top:0">
<defs><linearGradient id="gr" x1="0" y1="0" x2="0" y2="1"><stop offset="0" stop-color="#eea4a2" stop-opacity="0.7"/><stop offset="1" stop-color="#f8e6e6" stop-opacity="0.4"/></linearGradient><linearGradient id="gg" x1="0" y1="0" x2="0" y2="1"><stop offset="0" stop-color="#dadfd8"/><stop offset="1" stop-color="#f6f7f5"/></linearGradient></defs>
<text x="668.6" y="402.5" text-anchor="end" font-size="9.5" letter-spacing="-0.3" fill="#6e7079" font-family="'Liberation Sans', sans-serif">0</text>
<line x1="674.6" y1="384.8" x2="1100" y2="384.8" stroke="#fde4c4" stroke-width="1"/>
<text x="668.6" y="386.4" text-anchor="end" font-size="9.5" letter-spacing="-0.3" fill="#6e7079" font-family="'Liberation Sans', sans-serif">20,000</text>
<line x1="674.6" y1="368.7" x2="1100" y2="368.7" stroke="#fde4c4" stroke-width="1"/>
<text x="668.6" y="370.3" text-anchor="end" font-size="9.5" letter-spacing="-0.3" fill="#6e7079" font-family="'Liberation Sans', sans-serif">40,000</text>
<line x1="674.6" y1="352.5" x2="1100" y2="352.5" stroke="#fde4c4" stroke-width="1"/>
<text x="668.6" y="354.1" text-anchor="end" font-size="9.5" letter-spacing="-0.3" fill="#6e7079" font-family="'Liberation Sans', sans-serif">60,000</text>
<line x1="674.6" y1="336.4" x2="1100" y2="336.4" stroke="#fde4c4" stroke-width="1"/>
<text x="668.6" y="338.0" text-anchor="end" font-size="9.5" letter-spacing="-0.3" fill="#6e7079" font-family="'Liberation Sans', sans-serif">80,000</text>
<line x1="674.6" y1="320.3" x2="1100" y2="320.3" stroke="#fde4c4" stroke-width="1"/>
<text x="668.6" y="321.9" text-anchor="end" font-size="9.5" letter-spacing="-0.3" fill="#6e7079" font-family="'Liberation Sans', sans-serif">100,000</text>
<line x1="674.6" y1="304.2" x2="1100" y2="304.2" stroke="#fde4c4" stroke-width="1"/>
<text x="668.6" y="305.8" text-anchor="end" font-size="9.5" letter-spacing="-0.3" fill="#6e7079" font-family="'Liberation Sans', sans-serif">120,000</text>
<path d="M689.57 320.32 C689.57 320.32 704.32 325.47 719.50 328.54 C734.25 331.52 734.42 332.40 749.43 332.40 C764.35 332.40 764.46 332.01 779.36 330.31 C794.39 328.59 794.23 325.55 809.29 325.55 C824.16 325.55 824.31 325.64 839.22 325.64 C854.24 325.64 854.14 323.30 869.14 321.69 C884.07 320.08 884.13 319.19 899.08 319.19 C914.06 319.19 914.00 321.40 929.00 322.57 C943.93 323.74 947.52 322.57 958.93 323.86 C977.45 325.95 970.59 349.51 988.87 362.14 C1000.52 370.20 1003.57 370.20 1018.80 370.20 C1033.50 370.20 1033.76 368.99 1048.72 368.99 C1063.69 368.99 1063.75 368.99 1078.65 369.71 C1093.68 370.45 1108.59 373.50 1108.59 373.50 L1108.59 400.90 L689.57 400.90 Z" fill="url(#gr)"/>
<path d="M689.57 399.13 C689.57 399.13 704.59 399.13 719.50 399.13 C734.52 399.13 734.64 398.21 749.43 395.42 C764.57 392.57 764.23 390.82 779.36 387.85 C794.16 384.94 794.31 385.69 809.29 383.66 C824.24 381.62 824.41 382.52 839.22 379.71 C854.34 376.84 853.96 372.62 869.14 372.29 C883.89 371.97 884.11 371.97 899.08 371.97 C914.04 371.97 914.04 371.97 929.00 371.97 C943.97 371.97 944.00 371.97 958.93 371.97 C973.93 371.97 974.04 372.39 988.87 374.63 C1003.97 376.91 1003.66 381.00 1018.80 381.00 C1033.59 381.00 1033.93 381.00 1048.72 381.00 C1063.86 381.00 1063.53 376.19 1078.65 374.63 C1093.46 373.10 1108.59 373.10 1108.59 373.10 L1108.59 400.90 L689.57 400.90 Z" fill="url(#gg)"/>
<line x1="674.6" y1="400.9" x2="1100" y2="400.9" stroke="#6e7079" stroke-width="1"/>
<line x1="674.6" y1="400.9" x2="674.6" y2="404.9" stroke="#6e7079" stroke-width="1"/>
<line x1="704.5" y1="400.9" x2="704.5" y2="404.9" stroke="#6e7079" stroke-width="1"/>
<line x1="734.5" y1="400.9" x2="734.5" y2="404.9" stroke="#6e7079" stroke-width="1"/>
<line x1="764.4" y1="400.9" x2="764.4" y2="404.9" stroke="#6e7079" stroke-width="1"/>
<line x1="794.3" y1="400.9" x2="794.3" y2="404.9" stroke="#6e7079" stroke-width="1"/>
<line x1="824.2" y1="400.9" x2="824.2" y2="404.9" stroke="#6e7079" stroke-width="1"/>
<line x1="854.2" y1="400.9" x2="854.2" y2="404.9" stroke="#6e7079" stroke-width="1"/>
<line x1="884.1" y1="400.9" x2="884.1" y2="404.9" stroke="#6e7079" stroke-width="1"/>
<line x1="914.0" y1="400.9" x2="914.0" y2="404.9" stroke="#6e7079" stroke-width="1"/>
<line x1="944.0" y1="400.9" x2="944.0" y2="404.9" stroke="#6e7079" stroke-width="1"/>
<line x1="973.9" y1="400.9" x2="973.9" y2="404.9" stroke="#6e7079" stroke-width="1"/>
<line x1="1003.8" y1="400.9" x2="1003.8" y2="404.9" stroke="#6e7079" stroke-width="1"/>
<line x1="1033.8" y1="400.9" x2="1033.8" y2="404.9" stroke="#6e7079" stroke-width="1"/>
<line x1="1063.7" y1="400.9" x2="1063.7" y2="404.9" stroke="#6e7079" stroke-width="1"/>
<line x1="1093.6" y1="400.9" x2="1093.6" y2="404.9" stroke="#6e7079" stroke-width="1"/>
<line x1="1123.5" y1="400.9" x2="1123.5" y2="404.9" stroke="#6e7079" stroke-width="1"/>
<path d="M689.57 320.32 C689.57 320.32 704.32 325.47 719.50 328.54 C734.25 331.52 734.42 332.40 749.43 332.40 C764.35 332.40 764.46 332.01 779.36 330.31 C794.39 328.59 794.23 325.55 809.29 325.55 C824.16 325.55 824.31 325.64 839.22 325.64 C854.24 325.64 854.14 323.30 869.14 321.69 C884.07 320.08 884.13 319.19 899.08 319.19 C914.06 319.19 914.00 321.40 929.00 322.57 C943.93 323.74 947.52 322.57 958.93 323.86 C977.45 325.95 970.59 349.51 988.87 362.14 C1000.52 370.20 1003.57 370.20 1018.80 370.20 C1033.50 370.20 1033.76 368.99 1048.72 368.99 C1063.69 368.99 1063.75 368.99 1078.65 369.71 C1093.68 370.45 1108.59 373.50 1108.59 373.50" fill="none" stroke="#e8786a" stroke-width="1.6"/>
<path d="M689.57 399.13 C689.57 399.13 704.59 399.13 719.50 399.13 C734.52 399.13 734.64 398.21 749.43 395.42 C764.57 392.57 764.23 390.82 779.36 387.85 C794.16 384.94 794.31 385.69 809.29 383.66 C824.24 381.62 824.41 382.52 839.22 379.71 C854.34 376.84 853.96 372.62 869.14 372.29 C883.89 371.97 884.11 371.97 899.08 371.97 C914.04 371.97 914.04 371.97 929.00 371.97 C943.97 371.97 944.00 371.97 958.93 371.97 C973.93 371.97 974.04 372.39 988.87 374.63 C1003.97 376.91 1003.66 381.00 1018.80 381.00 C1033.59 381.00 1033.93 381.00 1048.72 381.00 C1063.86 381.00 1063.53 376.19 1078.65 374.63 C1093.46 373.10 1108.59 373.10 1108.59 373.10" fill="none" stroke="#3ccf8e" stroke-width="1.8"/>
<circle cx="689.57" cy="320.32" r="2" fill="#fff" stroke="#e8786a" stroke-width="1.3"/>
<circle cx="719.50" cy="328.54" r="2" fill="#fff" stroke="#e8786a" stroke-width="1.3"/>
<circle cx="749.43" cy="332.40" r="2" fill="#fff" stroke="#e8786a" stroke-width="1.3"/>
<circle cx="779.36" cy="330.31" r="2" fill="#fff" stroke="#e8786a" stroke-width="1.3"/>
<circle cx="809.29" cy="325.55" r="2" fill="#fff" stroke="#e8786a" stroke-width="1.3"/>
<circle cx="839.22" cy="325.64" r="2" fill="#fff" stroke="#e8786a" stroke-width="1.3"/>
<circle cx="869.14" cy="321.69" r="2" fill="#fff" stroke="#e8786a" stroke-width="1.3"/>
<circle cx="899.08" cy="319.19" r="2" fill="#fff" stroke="#e8786a" stroke-width="1.3"/>
<circle cx="929.00" cy="322.57" r="2" fill="#fff" stroke="#e8786a" stroke-width="1.3"/>
<circle cx="958.93" cy="323.86" r="2" fill="#fff" stroke="#e8786a" stroke-width="1.3"/>
<circle cx="988.87" cy="362.14" r="2" fill="#fff" stroke="#e8786a" stroke-width="1.3"/>
<circle cx="1018.80" cy="370.20" r="2" fill="#fff" stroke="#e8786a" stroke-width="1.3"/>
<circle cx="1048.72" cy="368.99" r="2" fill="#fff" stroke="#e8786a" stroke-width="1.3"/>
<circle cx="1078.65" cy="369.71" r="2" fill="#fff" stroke="#e8786a" stroke-width="1.3"/>
<circle cx="1108.59" cy="373.50" r="2" fill="#fff" stroke="#e8786a" stroke-width="1.3"/>
<circle cx="689.57" cy="399.13" r="2" fill="#fff" stroke="#3ccf8e" stroke-width="1.3"/>
<circle cx="719.50" cy="399.13" r="2" fill="#fff" stroke="#3ccf8e" stroke-width="1.3"/>
<circle cx="749.43" cy="395.42" r="2" fill="#fff" stroke="#3ccf8e" stroke-width="1.3"/>
<circle cx="779.36" cy="387.85" r="2" fill="#fff" stroke="#3ccf8e" stroke-width="1.3"/>
<circle cx="809.29" cy="383.66" r="2" fill="#fff" stroke="#3ccf8e" stroke-width="1.3"/>
<circle cx="839.22" cy="379.71" r="2" fill="#fff" stroke="#3ccf8e" stroke-width="1.3"/>
<circle cx="869.14" cy="372.29" r="2" fill="#fff" stroke="#3ccf8e" stroke-width="1.3"/>
<circle cx="899.08" cy="371.97" r="2" fill="#fff" stroke="#3ccf8e" stroke-width="1.3"/>
<circle cx="929.00" cy="371.97" r="2" fill="#fff" stroke="#3ccf8e" stroke-width="1.3"/>
<circle cx="958.93" cy="371.97" r="2" fill="#fff" stroke="#3ccf8e" stroke-width="1.3"/>
<circle cx="988.87" cy="374.63" r="2" fill="#fff" stroke="#3ccf8e" stroke-width="1.3"/>
<circle cx="1018.80" cy="381.00" r="2" fill="#fff" stroke="#3ccf8e" stroke-width="1.3"/>
<circle cx="1048.72" cy="381.00" r="2" fill="#fff" stroke="#3ccf8e" stroke-width="1.3"/>
<circle cx="1078.65" cy="374.63" r="2" fill="#fff" stroke="#3ccf8e" stroke-width="1.3"/>
<circle cx="1108.59" cy="373.10" r="2" fill="#fff" stroke="#3ccf8e" stroke-width="1.3"/>
<text x="688.1" y="409.9" text-anchor="end" font-size="9.5" fill="#6e7079" transform="rotate(-45 688.1 405.9)" font-family="'Liberation Sans', sans-serif">1</text>
<text x="718.0" y="409.9" text-anchor="end" font-size="9.5" fill="#6e7079" transform="rotate(-45 718.0 405.9)" font-family="'Liberation Sans', sans-serif">2</text>
<text x="747.9" y="409.9" text-anchor="end" font-size="9.5" fill="#6e7079" transform="rotate(-45 747.9 405.9)" font-family="'Liberation Sans', sans-serif">3</text>
<text x="777.9" y="409.9" text-anchor="end" font-size="9.5" fill="#6e7079" transform="rotate(-45 777.9 405.9)" font-family="'Liberation Sans', sans-serif">4</text>
<text x="807.8" y="409.9" text-anchor="end" font-size="9.5" fill="#6e7079" transform="rotate(-45 807.8 405.9)" font-family="'Liberation Sans', sans-serif">5</text>
<text x="837.7" y="409.9" text-anchor="end" font-size="9.5" fill="#6e7079" transform="rotate(-45 837.7 405.9)" font-family="'Liberation Sans', sans-serif">6</text>
<text x="867.6" y="409.9" text-anchor="end" font-size="9.5" fill="#6e7079" transform="rotate(-45 867.6 405.9)" font-family="'Liberation Sans', sans-serif">7</text>
<text x="897.6" y="409.9" text-anchor="end" font-size="9.5" fill="#6e7079" transform="rotate(-45 897.6 405.9)" font-family="'Liberation Sans', sans-serif">8</text>
<text x="927.5" y="409.9" text-anchor="end" font-size="9.5" fill="#6e7079" transform="rotate(-45 927.5 405.9)" font-family="'Liberation Sans', sans-serif">9</text>
<text x="957.4" y="409.9" text-anchor="end" font-size="9.5" fill="#6e7079" transform="rotate(-45 957.4 405.9)" font-family="'Liberation Sans', sans-serif">10</text>
<text x="987.4" y="409.9" text-anchor="end" font-size="9.5" fill="#6e7079" transform="rotate(-45 987.4 405.9)" font-family="'Liberation Sans', sans-serif">11</text>
<text x="1017.3" y="409.9" text-anchor="end" font-size="9.5" fill="#6e7079" transform="rotate(-45 1017.3 405.9)" font-family="'Liberation Sans', sans-serif">12</text>
<text x="1047.2" y="409.9" text-anchor="end" font-size="9.5" fill="#6e7079" transform="rotate(-45 1047.2 405.9)" font-family="'Liberation Sans', sans-serif">13</text>
<text x="1077.2" y="409.9" text-anchor="end" font-size="9.5" fill="#6e7079" transform="rotate(-45 1077.2 405.9)" font-family="'Liberation Sans', sans-serif">14</text>
<text x="1107.1" y="409.9" text-anchor="end" font-size="9.5" fill="#6e7079" transform="rotate(-45 1107.1 405.9)" font-family="'Liberation Sans', sans-serif">15</text>
</svg>
<div class="ptitle">本月客流趋势图</div>
</div>
<div class="panel" style="left:164px;top:453px;width:932px;height:100px">
<div class="ptitle" style="top:14px">今日客流趋势图</div>
</div>
<div class="btns"><div style="width:66px">客运量(人)</div><div style="width:83px">周转量(人公里)</div><div class="on" style="width:85px">平均运距(公里)</div><div style="width:83px">总里程数(公里)</div></div>
<div class="abs" style="left:1096px;top:58px;width:4px;height:22px;border-radius:2px;background:#a0a3a8"></div>
<div class="abs" style="left:1096px;top:95px;width:4px;height:437px;background:#dcdde2"></div>
<div class="abs" style="left:1096px;top:95px;width:4px;height:298px;border-radius:2px;background:#9a9ca2"></div>
</body></html>
